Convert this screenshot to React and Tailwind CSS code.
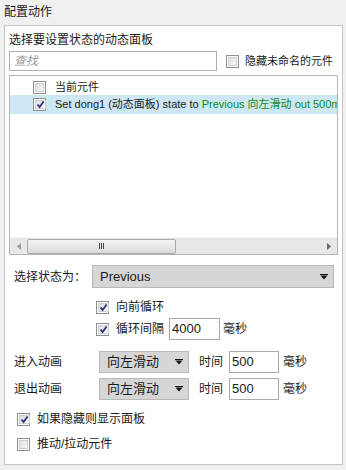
import React from 'react';

const font = { fontFamily: '"Liberation Sans", "Noto Sans CJK SC", sans-serif' };

const Check = ({ checked }) => (
  <span className="w-[13px] h-[13px] shrink-0 border border-[#8e8f8f] bg-white p-[1px] flex">
    <span className="flex-1 flex items-center justify-center border border-[#d0d0d0] bg-gradient-to-br from-[#dcdcdc] to-[#fbfbfb]">
      {checked && (
        <svg width="9" height="9" viewBox="0 0 9 9">
          <path d="M1.5 4.5 L3.6 7 L7.6 1.5" fill="none" stroke="#2b2e7a" strokeWidth="1.8" />
        </svg>
      )}
    </span>
  </span>
);

const Arrow = () => (
  <svg width="8" height="6" viewBox="0 0 8 6" className="shrink-0">
    <rect x="0" y="0" width="8" height="1" fill="#111" />
    <path d="M0.5 1.5 L7.5 1.5 L4 5.5 Z" fill="#111" />
  </svg>
);

const Select = ({ value, className }) => (
  <div className={`h-[22px] bg-[#d6d6d6] border border-[#b9b9b9] flex items-center justify-between pl-[7px] pr-[5px] text-[13px] ${className}`}>
    <span>{value}</span>
    <Arrow />
  </div>
);

const Field = ({ value, className }) => (
  <div className={`h-[22px] bg-white border border-[#ababab] flex items-center pl-[2px] text-[13px] ${className}`}>
    {value}
  </div>
);

const App = () => {
  return (
    <div className="w-[346px] h-[470px] bg-[#f0f0f0] text-[12px] text-[#1a1a1a] overflow-hidden" style={font}>
      <div className="h-[25px] flex items-center pl-[4px] pb-[1px]">配置动作</div>

      <div className="ml-[4px] w-[339px] h-[440px] border border-[#c4c4c4] bg-white">
        <div className="pl-[4px] mt-[4px] h-[20px] flex items-center">选择要设置状态的动态面板</div>

        {/* search */}
        <div className="pl-[4px] mt-[1px] flex items-center">
          <div className="w-[208px] h-[20px] border border-[#b0b0b0] flex items-center pl-[4px] italic text-[#9a9a9a]">查找</div>
          <span className="ml-[9px]"><Check /></span>
          <span className="ml-[6px] text-[11px]">隐藏未命名的元件</span>
        </div>

        {/* list */}
        <div className="ml-[4px] mt-[4px] w-[329px] h-[180px] border border-[#b4b4b4] flex flex-col overflow-hidden text-[11px]">
          <div className="flex-1 pt-[3px]">
            <div className="h-[16px] flex items-center pl-[23px]">
              <Check />
              <span className="ml-[9px]">当前元件</span>
            </div>
            <div className="h-[19px] flex items-center pl-[23px] bg-[#cde8f4] whitespace-nowrap">
              <Check checked />
              <span className="ml-[9px]">
                Set dong1 (动态面板) state to <span className="text-[#12881a]">Previous 向左滑动 out 500ms</span>
              </span>
            </div>
          </div>
          {/* horizontal scrollbar */}
          <div className="h-[17px] bg-[#e8e8e8] border-t border-[#f4f4f4] flex items-center">
            <div className="w-[17px] flex justify-center">
              <svg width="4" height="7" viewBox="0 0 4 7"><path d="M4 0 L0 3.5 L4 7 Z" fill="#9a9a9a" /></svg>
            </div>
            <div className="w-[149px] h-[15px] rounded-[2px] border border-[#a9a9a9] bg-gradient-to-b from-[#f4f4f4] to-[#dadada] flex items-center justify-center gap-[1px]">
              <span className="w-[1px] h-[6px] bg-[#444]" />
              <span className="w-[1px] h-[6px] bg-[#444]" />
              <span className="w-[1px] h-[6px] bg-[#444]" />
            </div>
            <div className="flex-1" />
            <div className="w-[17px] flex justify-center">
              <svg width="4" height="7" viewBox="0 0 4 7"><path d="M0 0 L4 3.5 L0 7 Z" fill="#6a6a6a" /></svg>
            </div>
          </div>
        </div>

        {/* state select */}
        <div className="pl-[9px] mt-[10px] flex items-center">
          <span className="w-[78px]">选择状态为：</span>
          <Select value="Previous" className="w-[242px] h-[23px]" />
        </div>

        <div className="pl-[91px] mt-[9px] h-[20px] flex items-center">
          <Check checked />
          <span className="ml-[7px]">向前循环</span>
        </div>
        <div className="pl-[91px] mt-[1px] flex items-center">
          <Check checked />
          <span className="ml-[7px]">循环间隔</span>
          <Field value="4000" className="ml-[5px] w-[51px]" />
          <span className="ml-[3px]">毫秒</span>
        </div>

        {/* animations */}
        <div className="pl-[9px] mt-[11px] flex items-center">
          <span className="w-[85px]">进入动画</span>
          <Select value="向左滑动" className="w-[90px]" />
          <span className="ml-[10px]">时间</span>
          <Field value="500" className="ml-[6px] w-[50px]" />
          <span className="ml-[4px]">毫秒</span>
        </div>
        <div className="pl-[9px] mt-[5px] flex items-center">
          <span className="w-[85px]">退出动画</span>
          <Select value="向左滑动" className="w-[90px]" />
          <span className="ml-[10px]">时间</span>
          <Field value="500" className="ml-[6px] w-[50px]" />
          <span className="ml-[4px]">毫秒</span>
        </div>

        <div className="pl-[12px] mt-[9px] h-[20px] flex items-center">
          <Check checked />
          <span className="ml-[7px]">如果隐藏则显示面板</span>
        </div>
        <div className="pl-[12px] mt-[5px] h-[20px] flex items-center">
          <Check />
          <span className="ml-[7px]">推动/拉动元件</span>
        </div>
      </div>
    </div>
  );
};

export default App;
